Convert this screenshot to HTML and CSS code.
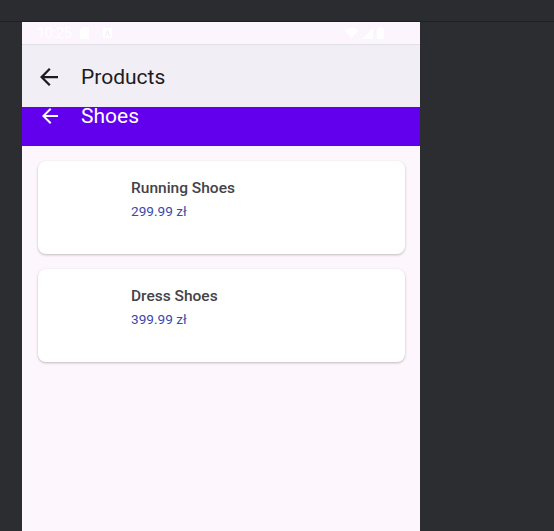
FILE: index.html
```html
<!DOCTYPE html>
<html>
<head>
<meta charset="utf-8">
<link rel="stylesheet" href="styles.css">
</head>
<body>
<div class="topstrip"></div>
<div class="phone">
  <div class="status">
    <div class="status-left">
      <span class="time">10:25</span>
      <svg class="sim" width="9" height="12" viewBox="0 0 9 12"><path d="M3 0H9V12H0V3Z" fill="#fff"/></svg>
      <svg class="note" width="9" height="10" viewBox="0 0 9 10"><rect x="0" y="0" width="9" height="10" rx="1" fill="#fff"/><path d="M2.5 8L4.5 2.5L6.5 8" stroke="#f4eaf4" stroke-width="1" fill="none"/></svg>
    </div>
    <div class="status-right">
      <svg width="13" height="10" viewBox="0 0 13 10"><path d="M0 2.5Q6.5 -2.5 13 2.5L6.5 10Z" fill="#fff"/></svg>
      <svg width="11" height="11" viewBox="0 0 11 11"><path d="M11 0V11H0Z" fill="#fff"/></svg>
      <svg width="7" height="12" viewBox="0 0 7 12"><rect x="2" y="0" width="3" height="2" fill="#fff"/><rect x="0" y="1.5" width="7" height="10.5" rx="1" fill="#fff"/></svg>
    </div>
  </div>
  <div class="appbar">
    <svg class="back" width="18" height="18" viewBox="0 0 16 16"><path d="M16 7H3.83l5.59-5.59L8 0 0 8l8 8 1.41-1.41L3.83 9H16z" fill="#1d1b20"/></svg>
    <span class="appbar-title">Products</span>
  </div>
  <div class="subbar">
    <svg class="back" width="16" height="16" viewBox="0 0 16 16"><path d="M16 7H3.83l5.59-5.59L8 0 0 8l8 8 1.41-1.41L3.83 9H16z" fill="#fff"/></svg>
    <span class="subbar-title">Shoes</span>
  </div>
  <div class="content">
    <div class="card">
      <div class="thumb"></div>
      <div class="info">
        <div class="name">Running Shoes</div>
        <div class="price">299.99 zł</div>
      </div>
    </div>
    <div class="card">
      <div class="thumb"></div>
      <div class="info">
        <div class="name">Dress Shoes</div>
        <div class="price">399.99 zł</div>
      </div>
    </div>
  </div>
</div>
</body>
</html>
```
FILE: styles.css
```css
html, body {
  margin: 0;
  padding: 0;
  height: 100%;
  overflow: hidden;
}
body {
  background: #2c2d31;
  font-family: Roboto, "Noto Sans", sans-serif;
}
.topstrip {
  height: 21px;
  border-bottom: 1px solid #1f2023;
  background: #2b2c30;
}
.phone {
  margin-left: 22px;
  width: 398px;
  height: 509px;
  background: #fdf6fd;
  display: flex;
  flex-direction: column;
}
.status {
  height: 22px;
  background: #fdf5fd;
  display: flex;
  align-items: center;
  justify-content: space-between;
  padding: 0 36px 0 15px;
  box-shadow: 0 1px 1px rgba(0,0,0,0.06);
  position: relative;
  z-index: 1;
}
.status-left, .status-right {
  display: flex;
  align-items: center;
}
.time {
  color: #fff;
  font-size: 14.5px;
  margin-right: 8px;
  letter-spacing: -0.3px;
}
.sim { margin-right: 14px; }
.status-right svg { margin-left: 4px; }
.appbar {
  height: 63px;
  background: #f2eef6;
  display: flex;
  align-items: center;
  padding-left: 18px;
  padding-top: 2px;
  box-sizing: border-box;
}
.back { flex: none; }
.appbar-title {
  margin-left: 23px;
  font-size: 21px;
  color: #1d1b20;
}
.subbar {
  height: 39px;
  background: #6200ee;
  display: flex;
  align-items: center;
  padding-left: 20px;
  padding-bottom: 22px;
  box-sizing: border-box;
}
.subbar-title {
  margin-left: 23px;
  font-size: 21px;
  color: #fff;
  line-height: 18px;
}
.content {
  padding: 15px 15px 0 16px;
  display: flex;
  flex-direction: column;
  gap: 15px;
}
.card {
  height: 93px;
  background: #fff;
  border-radius: 8px;
  box-shadow: 0 1px 3px rgba(0,0,0,0.18), 0 1px 2px rgba(0,0,0,0.08);
  display: flex;
  box-sizing: border-box;
  padding: 16px;
}
.thumb {
  width: 61px;
  height: 61px;
  margin-right: 16px;
  flex: none;
}
.info {
  display: flex;
  flex-direction: column;
}
.name {
  font-size: 15.5px;
  font-weight: 500;
  color: #444347;
  line-height: 20px;
  margin-top: 1px;
}
.price {
  font-size: 13.6px;
  color: #3a49ac;
  margin-top: 4px;
  line-height: 18px;
}
```
